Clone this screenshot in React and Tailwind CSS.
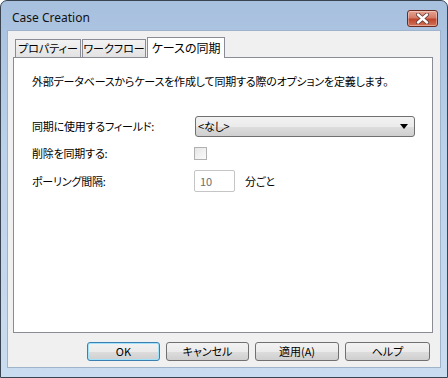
import React from "react";

const jp = "font-['Noto_Sans_CJK_JP','Noto_Sans',sans-serif] [font-feature-settings:'palt']";

const tabs = [
  { label: "プロパティー", w: "w-[66px]" },
  { label: "ワークフロー", w: "w-[64px]" },
];

const btnFace =
  "h-[19px] flex items-center justify-center rounded-[3px] text-[11px] leading-none text-black whitespace-nowrap bg-[linear-gradient(to_bottom,#f2f2f2_0%,#ebebeb_50%,#dddddd_51%,#cfcfcf_100%)]";

const CloseButton = () => (
  <div className="w-[31px] h-[17px] rounded-[3px] border border-[#6b2b22] bg-[linear-gradient(to_bottom,#e8a493_0%,#d47a66_45%,#c0442c_55%,#d2735a_100%)] shadow-[inset_0_0_0_1px_rgba(255,255,255,0.35)] flex items-center justify-center">
    <svg width="13" height="11" viewBox="0 0 13 11">
      <path d="M2 1.5 L11 9.5 M11 1.5 L2 9.5" stroke="#5a3a36" strokeWidth="4" strokeLinecap="round" />
      <path d="M2 1.5 L11 9.5 M11 1.5 L2 9.5" stroke="#ffffff" strokeWidth="2.4" strokeLinecap="round" />
    </svg>
  </div>
);

export default function App() {
  return (
    <div className="w-[448px] h-[378px] border border-[#3a4450] rounded-t-[7px] bg-[linear-gradient(to_bottom,#a7c0de_0%,#bcd2ea_40%,#cadcef_100%)] flex flex-col overflow-hidden">
      {/* title bar */}
      <div className="h-[29px] flex items-start justify-between">
        <div className="pl-[11px] pt-[9px] text-[12px] leading-[16px] text-[#111] font-['Noto_Sans','Liberation_Sans',sans-serif]">
          Case Creation
        </div>
        <div className="pt-[9px] pr-[9px]">
          <CloseButton />
        </div>
      </div>

      {/* client area */}
      <div className={`ml-[6px] w-[434px] h-[338px] border border-[#9fb3ca] bg-[#f0f0f0] pt-[6px] pl-[5px] pr-[10px] flex flex-col ${jp}`}>
        {/* tab strip */}
        <div className="h-[20px] pl-[2px] flex items-end">
          {tabs.map((t) => (
            <div
              key={t.label}
              className={`${t.w} h-[18px] mr-[1px] border border-b-0 border-[#898c95] bg-[linear-gradient(to_bottom,#f3f3f3,#e2e2e2)] flex items-center justify-center text-[11px] leading-none text-black whitespace-nowrap`}
            >
              {t.label}
            </div>
          ))}
          <div className="relative z-10 -mb-px w-[78px] h-[21px] border border-b-0 border-[#898c95] bg-white flex items-center justify-center text-[12px] leading-none text-black whitespace-nowrap">
            ケースの同期
          </div>
        </div>

        {/* tab panel */}
        <div className="w-[420px] h-[276px] border border-[#898c95] bg-white pl-[18px] pt-[15px] text-[11px] tracking-[-0.2px] text-black">
          <div className="leading-[16px]">外部データベースからケースを作成して同期する際のオプションを定義します。</div>

          <div className="mt-[27px] flex items-center h-[21px]">
            <div className="w-[162px]">同期に使用するフィールド:</div>
            <div className="ml-[1px] w-[220px] h-[21px] rounded-[3px] border border-[#707070] bg-[linear-gradient(to_bottom,#f2f2f2_0%,#ebebeb_50%,#dddddd_51%,#cfcfcf_100%)] flex items-center justify-between pl-[2px] pr-[6px]">
              <span className="leading-none">&lt;なし&gt;</span>
              <svg width="8" height="5" viewBox="0 0 8 5">
                <path d="M0 0 H8 L4 5 Z" fill="#000" />
              </svg>
            </div>
          </div>

          <div className="mt-[7px] flex items-center h-[18px]">
            <div className="w-[162px]">削除を同期する:</div>
            <div className="w-[13px] h-[13px] border border-[#b1b1b1] bg-[linear-gradient(to_bottom_right,#e6e6e6,#fbfbfb)]" />
          </div>

          <div className="mt-[8px] flex items-center h-[22px]">
            <div className="w-[162px]">ポーリング間隔:</div>
            <div className="w-[41px] h-[22px] border border-[#c5c5c5] rounded-[2px] bg-white flex items-center pl-[5px] text-[#6d6d6d]">
              10
            </div>
            <div className="ml-[10px]">分ごと</div>
          </div>
        </div>

        {/* buttons */}
        <div className="mt-[9px] flex justify-end gap-[6px]">
          <div className={`${btnFace} w-[73px] border border-[#3c7fb1] shadow-[inset_0_0_0_1px_#9fe2f9]`}>OK</div>
          <div className={`${btnFace} w-[83px] border border-[#707070]`}>キャンセル</div>
          <div className={`${btnFace} w-[84px] border border-[#707070]`}>適用(A)</div>
          <div className={`${btnFace} w-[85px] border border-[#707070]`}>ヘルプ</div>
        </div>
      </div>
    </div>
  );
}
